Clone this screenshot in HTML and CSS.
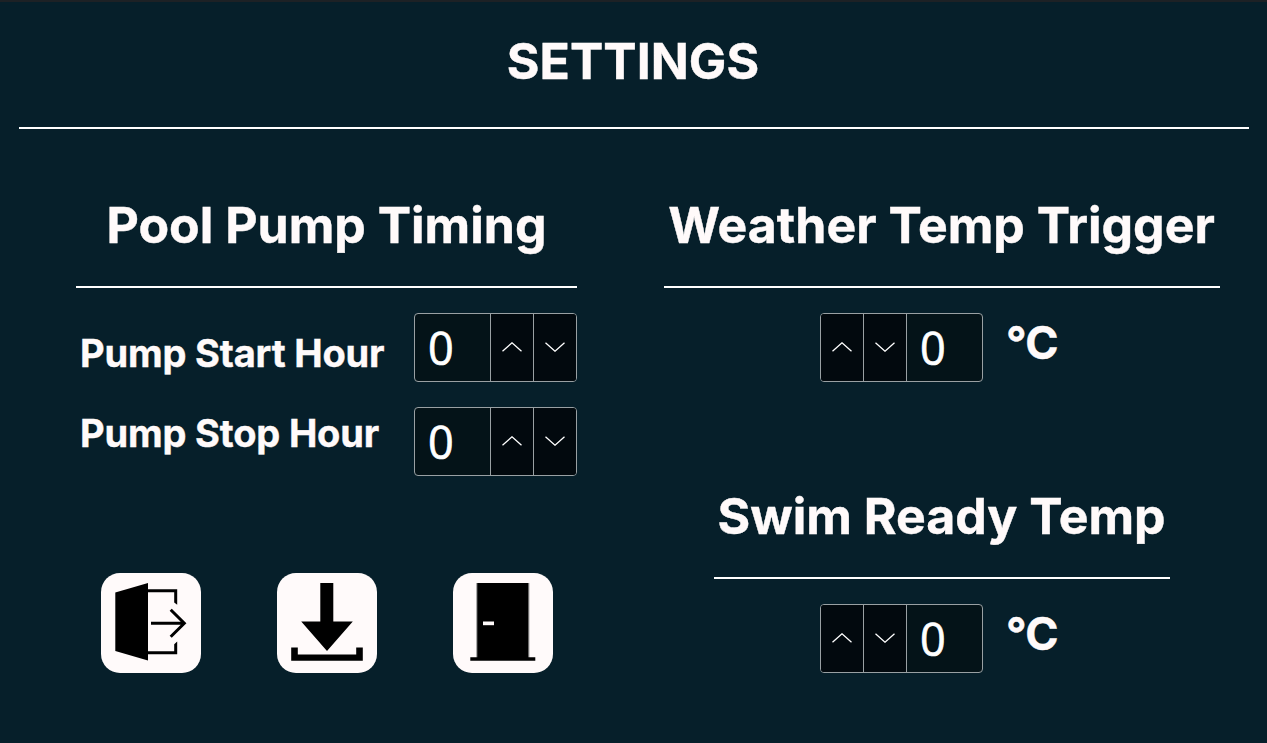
FILE: index.html
```html
<!DOCTYPE html>
<html lang="en">
<head>
<meta charset="utf-8">
<title>Settings</title>
<link rel="stylesheet" href="styles.css">
</head>
<body>
<svg class="symbols" aria-hidden="true">
  <symbol id="up" viewBox="0 0 20 10"><path d="M.5 9.300 10 .8l9.500 8.500"/></symbol>
  <symbol id="down" viewBox="0 0 20 10"><path d="M.5.7 10 9.200 19.500.7"/></symbol>
</svg>
<header class="title"><h1>SETTINGS</h1></header>
<main class="panels">
  <div class="left">
    <section class="group">
      <h2>Pool Pump Timing</h2>
      <div class="timing">
        <div class="labels"><span>Pump Start Hour</span><span>Pump Stop Hour</span></div>
        <div class="inputs">
          <div class="spinner"><span class="value">0</span><span class="step"><svg><use href="#up"/></svg></span><span class="step"><svg><use href="#down"/></svg></span></div>
          <div class="spinner"><span class="value">0</span><span class="step"><svg><use href="#up"/></svg></span><span class="step"><svg><use href="#down"/></svg></span></div>
        </div>
      </div>
    </section>
    <div class="actions">
      <button class="action" aria-label="Exit"><svg viewBox="0 0 100 100">
        <path d="M14.300 19.500 47 10v77.500L14.300 78z"/>
        <path d="M47 16.300h29.200v15.400l-3-2.200V19.300H47zM47 81.300h29.200V68.500l-3 2.700v7.100H47z"/>
        <path class="line" d="M50 50.300H83M69.700 36.800 83.300 50.300 69.700 63.800"/>
      </svg></button>
      <button class="action" aria-label="Download"><svg viewBox="0 0 100 100">
        <path d="M43.300 10h13v38.500h19.500L50 78 24.200 48.500h19.100z"/>
        <path d="M14.200 74.500h6.600v7h58.400v-7h6.600v13.200H14.200z"/>
      </svg></button>
      <button class="action" aria-label="Door"><svg viewBox="0 0 100 100">
        <path class="frame" d="M23.200 10h53.200v76H23.200z"/>
        <path d="M24.300 10h51v74.300h7v3.400H17.300v-3.400h7z"/>
        <path class="handle" d="M30 48.500h11v3.700H30z"/>
      </svg></button>
    </div>
  </div>
  <div class="right">
    <section class="group">
      <h2>Weather Temp Trigger</h2>
      <div class="temp"><div class="spinner"><span class="step"><svg><use href="#up"/></svg></span><span class="step"><svg><use href="#down"/></svg></span><span class="value">0</span></div><span class="unit">°C</span></div>
    </section>
    <section class="group narrow">
      <h2>Swim Ready Temp</h2>
      <div class="temp"><div class="spinner"><span class="step"><svg><use href="#up"/></svg></span><span class="step"><svg><use href="#down"/></svg></span><span class="value">0</span></div><span class="unit">°C</span></div>
    </section>
  </div>
</main>
</body>
</html>
```
FILE: styles.css
```css
* { box-sizing: border-box; }
body {
  margin: 0;
  height: 743px;
  overflow: hidden;
  border-top: 2px solid #1d2125;
  background: #061f2a;
  color: snow;
  font-family: Inter, sans-serif;
}
.symbols { display: none; }
h1, h2 {
  margin: 0;
  font-size: 50px;
  line-height: 60px;
  font-weight: 700;
  text-align: center;
  white-space: nowrap;
  -webkit-text-stroke: .4px snow;
}
h1 { padding-right: 2px; }
.title {
  margin: 0 18px 0 19px;
  padding: 29px 0 36px;
  border-bottom: 2px solid #fff;
}
.panels {
  display: flex;
  gap: 87px;
  padding: 66px 47px 0 76px;
}
.left { width: 501px; }
.right {
  width: 556px;
  display: flex;
  flex-direction: column;
  align-items: center;
  gap: 104px;
}
.right .group { width: 556px; }
.right .narrow { width: 456px; }
h2 {
  padding-bottom: 31px;
  border-bottom: 2px solid #fff;
}
.right h2 { padding-right: 1px; }
.timing {
  display: flex;
  justify-content: space-between;
  padding: 25px 0 0 4px;
}
.labels {
  display: flex;
  flex-direction: column;
  font-size: 38px;
  line-height: 80px;
  font-weight: 700;
  letter-spacing: -.17px;
  white-space: nowrap;
  -webkit-text-stroke: .4px snow;
}
.inputs { display: grid; gap: 25px; align-content: start; }
.spinner {
  display: flex;
  width: 163px;
  height: 69px;
  border: 1px solid #99a0a3;
  border-radius: 4px;
  overflow: hidden;
  background: #041318;
  color: #fff;
}
.spinner > * + * { border-left: 1px solid #99a0a3; }
.value {
  flex: 1;
  padding-left: 13px;
  font: 45px/67px "Open Sans", sans-serif;
  -webkit-text-stroke: .7px #fff;
}
.step {
  flex: 0 0 43px;
  display: flex;
  align-items: center;
  justify-content: center;
  padding-bottom: 2px;
  background: #02090e;
}
.step:first-child { flex-basis: 42px; }
.step svg {
  width: 20px;
  height: 10px;
  fill: none;
  stroke: #fff;
  stroke-width: 1.3;
}
.temp { display: flex; gap: 23px; padding: 25px 0 0 156px; }
.narrow .temp { padding-left: 106px; }
.unit {
  font-size: 45px;
  line-height: 60px;
  font-weight: 700;
  letter-spacing: -.6px;
  -webkit-text-stroke: .4px snow;
}
.actions { display: flex; gap: 76px; padding: 97px 0 0 25px; }
.action {
  width: 100px;
  height: 100px;
  padding: 0;
  border: 0;
  border-radius: 19px;
  background: snow;
}
.action svg { display: block; width: 100px; height: 100px; }
.line { fill: none; stroke: #000; stroke-width: 3; }
.frame { fill: #999; }
.handle { fill: snow; }
```
